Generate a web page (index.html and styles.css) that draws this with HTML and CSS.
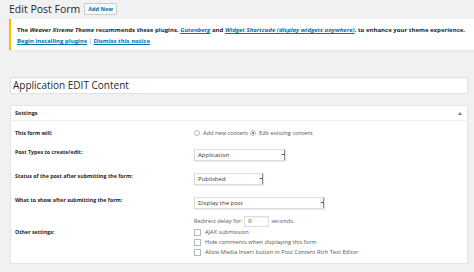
FILE: index.html
```html
<!DOCTYPE html>
<html>
<head>
<meta charset="utf-8">
<link rel="stylesheet" href="styles.css">
</head>
<body>
<div class="wrap">
  <div class="head">
    <h1 class="title">Edit Post Form</h1>
    <a class="add-new">Add New</a>
  </div>
  <div class="notice">
    <p>The <em>Weaver Xtreme Theme</em> recommends these plugins, <a><em>Gutenberg</em></a> and <a><em>Widget Shortcode (display widgets anywhere)</em></a>, to enhance your theme experience.</p>
    <p><a>Begin installing plugins</a> <span class="sep">|</span> <a>Dismiss this notice</a></p>
  </div>
  <div class="title-input">Application EDIT Content</div>
  <div class="postbox">
    <div class="pb-head"><span>Settings</span><span class="toggle"></span></div>
    <div class="pb-body">
      <div class="row r1">
        <div class="lbl">This form will:</div>
        <div class="fld radios">
          <span class="radio"></span><span class="rtext">Add new content</span>
          <span class="radio on"></span><span class="rtext">Edit existing content</span>
        </div>
      </div>
      <div class="row r2">
        <div class="lbl">Post Types to create/edit:</div>
        <div class="fld"><div class="sel w-app"><span class="val">Application</span><span class="arr"></span></div></div>
      </div>
      <div class="row r3">
        <div class="lbl">Status of the post after submitting the form:</div>
        <div class="fld"><div class="sel w-pub"><span class="val">Published</span><span class="arr"></span></div></div>
      </div>
      <div class="row r4">
        <div class="lbl">What to show after submitting the form:</div>
        <div class="fld"><div class="sel w-disp"><span class="val">Display the post</span><span class="arr"></span></div></div>
      </div>
      <div class="row r5">
        <div class="lbl other">Other settings:</div>
        <div class="fld opts">
          <div class="delay"><span>Redirect delay for:</span><span class="num">0</span><span>seconds.</span></div>
          <div class="chk"><span class="box"></span><span>AJAX submission</span></div>
          <div class="chk"><span class="box"></span><span>Hide comments when displaying this form</span></div>
          <div class="chk"><span class="box"></span><span>Allow Media Insert button in Post Content Rich Text Editor</span></div>
        </div>
      </div>
    </div>
  </div>
</div>
</body>
</html>
```

FILE: styles.css
```css
html, body {
  margin: 0;
  padding: 0;
  background: #f1f1f1;
  font-family: "Open Sans", "DejaVu Sans", sans-serif;
  color: #444;
}
.wrap {
  padding: 2px 0 0 9px;
}
.head {
  display: flex;
  align-items: center;
  gap: 4px;
  height: 14px;
}
.title {
  margin: 0;
  font-size: 10.5px;
  font-weight: 400;
  line-height: 14px;
  color: #23282d;
}
.add-new {
  display: block;
  height: 10px;
  line-height: 10px;
  padding: 0 3px;
  border: 1px solid #ccc;
  border-radius: 1px;
  background: #f7f7f7;
  color: #0073aa;
  font-size: 5.5px;
  font-weight: 700;
}
.notice {
  margin-top: 3px;
  background: #fff;
  border-left: 2px solid #ffb900;
  padding: 6px 0 2px 6px;
  height: 23px;
  box-shadow: 0 1px 1px rgba(0,0,0,0.05);
}
.notice p {
  margin: 0;
  font-size: 6.05px;
  line-height: 11px;
  font-weight: 700;
  color: #23282d;
  white-space: nowrap;
}
.notice a {
  color: #0073aa;
  text-decoration: underline;
}
.notice .sep {
  color: #777;
  font-weight: 400;
}
.title-input {
  margin: 27px 6px 0 1px;
  height: 15px;
  background: #fff;
  border: 1px solid #e2e2e2;
  box-shadow: inset 0 1px 1px rgba(0,0,0,0.04);
  font-size: 10px;
  line-height: 15px;
  padding-left: 2px;
  color: #23282d;
}
.postbox {
  margin: 11px 6px 0 1px;
  background: #fff;
  border: 1px solid #e5e5e5;
  box-shadow: 0 1px 1px rgba(0,0,0,0.04);
}
.pb-head {
  display: flex;
  justify-content: space-between;
  align-items: center;
  height: 14px;
  padding: 0 5px 0 4px;
  border-bottom: 1px solid #eee;
  font-size: 5.6px;
  font-weight: 700;
  color: #23282d;
}
.toggle {
  width: 0;
  height: 0;
  border-left: 2px solid transparent;
  border-right: 2px solid transparent;
  border-bottom: 3px solid #72777c;
}
.pb-body {
  padding-bottom: 6px;
}
.row {
  display: grid;
  grid-template-columns: 183px 1fr;
  align-items: start;
}
.lbl {
  padding-left: 4px;
  font-size: 5.3px;
  line-height: 8px;
  font-weight: 700;
  color: #23282d;
  white-space: nowrap;
}
.fld {
  font-size: 5.7px;
  color: #555;
}
.r1 { margin-top: 8px; }
.r2 { margin-top: 11px; }
.r3, .r4 { margin-top: 11px; }
.r5 { margin-top: 6px; }
.radios {
  display: flex;
  align-items: center;
  height: 8px;
}
.radio {
  width: 6px;
  height: 6px;
  box-sizing: border-box;
  border: 1px solid #b4b9be;
  border-radius: 50%;
  background: #fff;
  margin-right: 3px;
  display: flex;
  align-items: center;
  justify-content: center;
}
.radio.on::before {
  content: "";
  width: 2px;
  height: 2px;
  border-radius: 50%;
  background: #555;
}
.rtext { margin-right: 2px; }
.sel {
  margin-top: 1px;
  height: 12px;
  box-sizing: border-box;
  display: flex;
  align-items: stretch;
  background: #fff;
  border: 1px solid #ddd;
  box-shadow: 0 1px 1px rgba(0,0,0,0.08);
}
.w-app { width: 92px; }
.w-pub { width: 70px; }
.w-disp { width: 131px; }
.val {
  flex: 1;
  padding-left: 3px;
  font-size: 6px;
  line-height: 10px;
  color: #333;
}
.arr {
  width: 2px;
  border-left: 1px solid #eee;
  border-right: 1px solid #888;
  background: linear-gradient(#fff 0, #fff 4px, #444 4px, #444 5px, #fff 5px);
}
.opts {
  display: flex;
  flex-direction: column;
}
.delay {
  display: flex;
  align-items: center;
  height: 12px;
  gap: 2px;
}
.num {
  width: 25px;
  height: 11px;
  box-sizing: border-box;
  border: 1px solid #ddd;
  box-shadow: inset 0 1px 1px rgba(0,0,0,0.06);
  padding-left: 3px;
  line-height: 9px;
  color: #333;
}
.chk {
  display: flex;
  align-items: center;
  height: 10px;
  gap: 4px;
}
.box {
  width: 7px;
  height: 7px;
  box-sizing: border-box;
  border: 1px solid #b4b9be;
  background: #fff;
}
.other { margin-top: 13px; }
```
